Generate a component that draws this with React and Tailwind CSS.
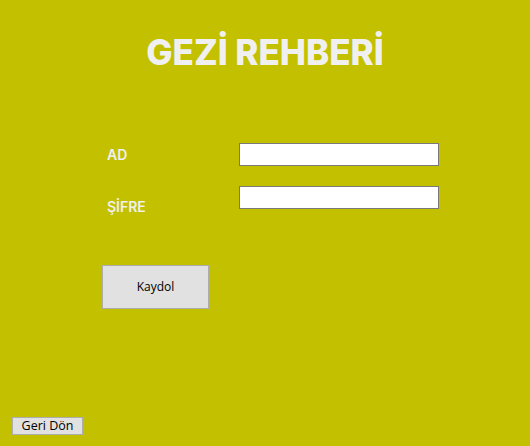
import React from 'react';

const App = () => {
  return (
    <div className="w-[530px] h-[446px] bg-[#c3c000] flex flex-col font-['Open_Sans',sans-serif] overflow-hidden">
      <h1 className="mt-[28px] h-[48px] text-center text-[35px] leading-[48px] font-extrabold text-[#f0f0f0] font-['Inter',sans-serif]">
        GEZİ REHBERİ
      </h1>

      {/* Form */}
      <div className="mt-[67px] flex flex-col">
        <div className="flex items-center h-[23px]">
          <span className="ml-[107px] w-[132px] text-[14px] font-semibold text-[#f0f0f0] leading-none font-['Inter',sans-serif]">AD</span>
          <input type="text" className="w-[200px] h-[23px] bg-white border border-[#7a7a7a] outline-none" />
        </div>
        <div className="mt-[20px] flex items-start h-[23px]">
          <span className="ml-[107px] w-[132px] mt-[14px] text-[14px] font-semibold text-[#f0f0f0] leading-none font-['Inter',sans-serif]">ŞİFRE</span>
          <input type="text" className="w-[200px] h-[23px] bg-white border border-[#7a7a7a] outline-none" />
        </div>
      </div>

      <div className="mt-[56px] ml-[102px]">
        <button className="w-[107px] h-[44px] bg-[#e1e1e1] border border-[#adadad] text-[12px] text-black">
          Kaydol
        </button>
      </div>

      <div className="mt-auto mb-[10px] ml-[12px]">
        <button className="w-[71px] h-[18px] bg-[#e1e1e1] border border-[#adadad] text-[12.5px] leading-[16px] text-black">
          Geri Dön
        </button>
      </div>
    </div>
  );
};

export default App;
